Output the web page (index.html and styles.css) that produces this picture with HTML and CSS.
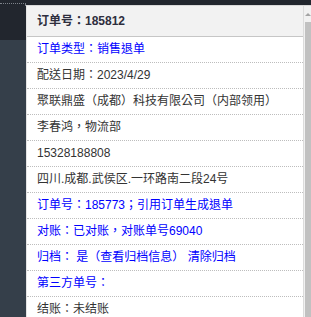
FILE: index.html
```html
<!DOCTYPE html>
<html lang="zh-TW">

<head>
    <meta charset="UTF-8">
    <meta name="viewport" content="width=device-width, initial-scale=1.0">
    <title>订单详情</title>
    <link rel="stylesheet" href="styles.css">
</head>

<body>
    <div class="side"></div>
    <div class="popup">
        <div class="panel">
            <div class="head">订单号：185812</div>
            <div class="row blue">订单类型：销售退单</div>
            <div class="row">配送日期：2023/4/29</div>
            <div class="row">聚联鼎盛（成都）科技有限公司（内部领用）</div>
            <div class="row">李春鸿，物流部</div>
            <div class="row">15328188808</div>
            <div class="row">四川.成都.武侯区.一环路南二段24号</div>
            <div class="row blue">订单号：185773；引用订单生成退单</div>
            <div class="row blue">对账：已对账，对账单号69040</div>
            <div class="row blue">归档： 是（查看归档信息） 清除归档</div>
            <div class="row blue">第三方单号：</div>
            <div class="row">结账：未结账</div>
        </div>
        <div class="scrollbar">
            <span class="arrow"></span>
            <span class="thumb"></span>
        </div>
    </div>
</body>
</html>
```

FILE: styles.css
```css
body {
    margin: 0;
    height: 317px;
    overflow: hidden;
    display: flex;
    font: 12px "Liberation Sans", "Noto Sans CJK TC", "Noto Sans CJK SC", sans-serif;
    background: linear-gradient(#22262e 0 40px, #353f4a 40px);
}

.side {
    width: 26px;
    height: 2px;
    margin-top: 3px;
    border-top: 1px dotted #7d828a;
    border-right: 1px dotted #7d828a;
    box-sizing: border-box;
}

.popup {
    flex: 1;
    display: flex;
    margin-top: 5px;
    border-top: 1px solid #d9d9d9;
    background: #fff;
}

.panel {
    flex: 1;
    border-left: 1px solid #e4e4e4;
    border-right: 1px solid #dcdcdc;
}

.head {
    height: 30px;
    line-height: 30px;
    padding-left: 10px;
    background: #f2f2f2;
    border-bottom: 1px solid #c6c6c6;
    color: #2e2e3e;
    font-weight: bold;
}

.row {
    height: 25px;
    line-height: 25px;
    padding-left: 10px;
    border-bottom: 1px dotted #bdbdbd;
    color: #333;
    white-space: nowrap;
}

.blue {
    color: #0000ff;
}

.scrollbar {
    width: 7px;
    background: #f1f1f1;
    display: flex;
    flex-direction: column;
    align-items: flex-end;
}

.arrow {
    width: 0;
    height: 0;
    margin: 7px 0 0;
    border-left: 3px solid transparent;
    border-right: 3px solid transparent;
    border-bottom: 3px solid #a3a3a3;
}

.thumb {
    flex: 1;
    width: 6px;
    margin-top: 6px;
    background: #c1c1c1;
}
```
